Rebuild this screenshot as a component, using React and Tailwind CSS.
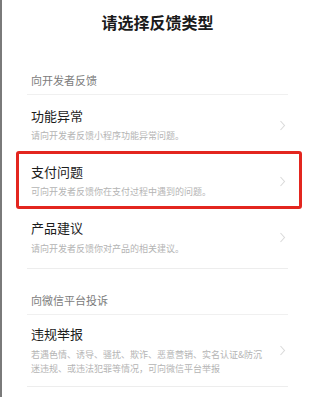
import React from "react";

const Chevron = () => (
  <svg width="7" height="11" viewBox="0 0 7 11" className="shrink-0">
    <polyline points="1.5,1 5.5,5.5 1.5,10" fill="none" stroke="#dadada" strokeWidth="1.1" />
  </svg>
);

const Item = ({ title, sub, className = "", subClass = "" }) => (
  <div className={`flex items-center pl-1 pr-[2px] ${className}`}>
    <div className="flex-1 flex flex-col">
      <div className="text-[13px] leading-[18px] text-[#1c1c1c]">{title}</div>
      <div className={`text-[9px] leading-[14px] text-[#b4b4b4] ${subClass}`}>{sub}</div>
    </div>
    <Chevron />
  </div>
);

export default function App() {
  return (
    <div
      className="min-h-[397px] w-[313px] bg-white border-l-[2px] border-[#7a7a7a] overflow-hidden"
      style={{ fontFamily: '"Noto Sans CJK SC", "Noto Sans", sans-serif' }}
    >
      <div className="pt-[10px] text-center text-[16px] leading-[24px] font-semibold text-[#1a1a1a]">
        请选择反馈类型
      </div>
      <div className="px-[25px] pt-[15px]">
        <div className="pl-1 pt-[24px] pb-[7px] text-[11px] leading-[14px] text-[#7c7c7c]">向开发者反馈</div>
        <div className="h-px bg-[#f0f0f0]" />
        <Item
          className="pt-3 pb-2"
          subClass="mt-1"
          title="功能异常"
          sub="请向开发者反馈小程序功能异常问题。"
        />
        <div className="relative">
          <Item
            className="pt-3 pb-2"
            subClass="mt-1"
            title="支付问题"
            sub="可向开发者反馈你在支付过程中遇到的问题。"
          />
          <div className="absolute left-[-11px] right-[-14px] top-0 bottom-[-2px] border-[3px] border-[#e3261f] rounded-[3px]" />
        </div>
        <Item
          className="pt-3 pb-3"
          subClass="mt-[5px]"
          title="产品建议"
          sub="请向开发者反馈你对产品的相关建议。"
        />
        <div className="h-px bg-[#ededed]" />
        <div className="pl-1 pt-[24px] pb-[7px] text-[11px] leading-[14px] text-[#7c7c7c]">向微信平台投诉</div>
        <div className="h-px bg-[#f0f0f0]" />
        <div className="flex items-center pl-1 pr-[2px] pt-[10px] pb-[10px]">
          <div className="flex-1 flex flex-col">
            <div className="text-[13px] leading-[18px] text-[#1c1c1c]">违规举报</div>
            <div className="mt-[5px] w-[236px] text-[9px] leading-[14px] text-[#b4b4b4]">
              若遇色情、诱导、骚扰、欺诈、恶意营销、实名认证&amp;防沉迷违规、或违法犯罪等情况，可向微信平台举报
            </div>
          </div>
          <Chevron />
        </div>
        <div className="h-px bg-[#ededed]" />
      </div>
    </div>
  );
}
